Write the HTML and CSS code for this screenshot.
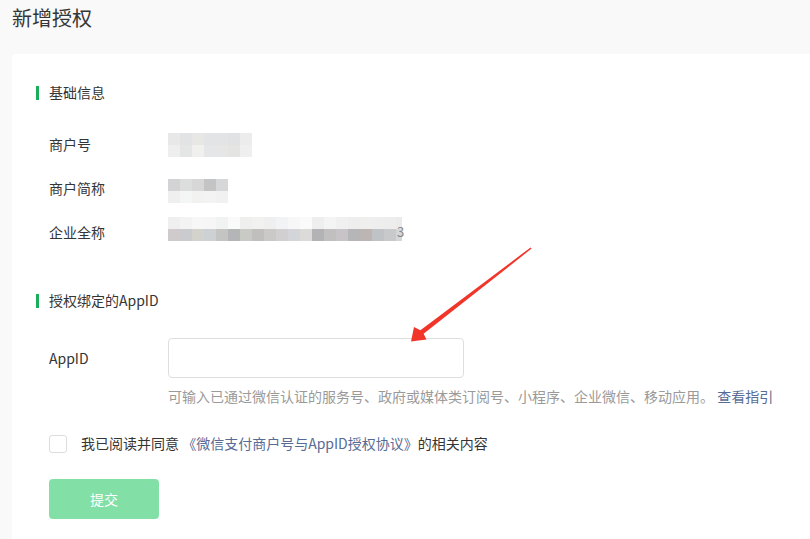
FILE: index.html
```html
<!DOCTYPE html>
<html lang="zh-CN">
<head>
<meta charset="utf-8">
<title>新增授权</title>
<link rel="stylesheet" href="styles.css">
</head>
<body>
<div class="page">
  <h1 class="page-title">新增授权</h1>
  <div class="card">
    <div class="section-title">基础信息</div>
    <div class="info-row">
      <div class="label">商户号</div>
      <div class="mosaic mosaic-1">
        <i style="background:#e8e8e8"></i><i style="background:#e2e3e5"></i><i style="background:#e7e7e6"></i><i style="background:#e3e4e6"></i><i style="background:#e3e4e6"></i><i style="background:#e1e2e4"></i><i style="background:#ececec"></i>
        <i style="background:#efeeee"></i><i style="background:#e4e5e5"></i><i style="background:#f0f0ef"></i><i style="background:#e5e6e8"></i><i style="background:#e6e6e6"></i><i style="background:#e4e4e3"></i><i style="background:#efefef"></i>
      </div>
    </div>
    <div class="info-row">
      <div class="label">商户简称</div>
      <div class="mosaic mosaic-2">
        <i style="background:#d3d2d4"></i><i style="background:#dcdddd"></i><i style="background:#d7d7d8"></i><i style="background:#c5c4c5"></i><i style="background:#d5d7d9"></i>
        <i style="background:#efefef"></i><i style="background:#f4f5f5"></i><i style="background:#f2f2f1"></i><i style="background:#f3f3f3"></i><i style="background:#f1f1f1"></i>
      </div>
    </div>
    <div class="info-row">
      <div class="label">企业全称</div>
      <div class="mosaic mosaic-3">
        <i style="background:#efefef"></i><i style="background:#f3f3f3"></i><i style="background:#f7f7f7"></i><i style="background:#f6f6f6"></i><i style="background:#f1f2f2"></i><i style="background:#fafafa"></i><i style="background:#efefee"></i><i style="background:#f1f1ef"></i><i style="background:#efefef"></i><i style="background:#f2f3f4"></i><i style="background:#f7f7f7"></i><i style="background:#fafafa"></i><i style="background:#eeeeef"></i><i style="background:#f4f4f4"></i><i style="background:#f0f0f0"></i><i style="background:#efeeee"></i><i style="background:#efefee"></i><i style="background:#eeeeee"></i><i style="background:#ededed"></i><i style="background:#ebebeb"></i>
        <i style="background:#cfcbcc"></i><i style="background:#cacbce"></i><i style="background:#d3d2cd"></i><i style="background:#cdd1d4"></i><i style="background:#c4c4c2"></i><i style="background:#b4b5b7"></i><i style="background:#c9cac5"></i><i style="background:#c0bfbd"></i><i style="background:#cbc9c8"></i><i style="background:#d1cfd0"></i><i style="background:#d3d5d8"></i><i style="background:#dcdbd9"></i><i style="background:#b3b3b5"></i><i style="background:#c1bfbf"></i><i style="background:#c8c3c6"></i><i style="background:#b6b6b8"></i><i style="background:#bdb5b3"></i><i style="background:#c0c3c5"></i><i style="background:#c7c9cb"></i><i style="background:#d4d6d8"></i>
      </div>
      <span class="mosaic-tail">3</span>
    </div>

    <div class="section-title section-title-2">授权绑定的AppID</div>
    <div class="form-row">
      <label class="label" for="appid">AppID</label>
      <input id="appid" class="text-input" type="text">
    </div>
    <div class="hint">可输入已通过微信认证的服务号、政府或媒体类订阅号、小程序、企业微信、移动应用。 <a class="link" href="#">查看指引</a></div>

    <div class="agree-row">
      <span class="checkbox"></span>
      <span class="agree-text">我已阅读并同意 <a class="link" href="#">《微信支付商户号与AppID授权协议》</a>的相关内容</span>
    </div>

    <button class="submit-btn" type="button">提交</button>
  </div>

  <svg class="arrow" width="810" height="539" viewBox="0 0 810 539" aria-hidden="true">
    <polygon points="411,341.5 414,327 420.4,330.2 530.6,247.4 531.6,248.6 423.6,333.8 426.5,339.5" fill="#f2352b"/>
  </svg>
</div>
</body>
</html>
```

FILE: styles.css
```css
* { box-sizing: border-box; }
html, body {
  margin: 0;
  padding: 0;
  background: #f9f9f9;
}
body {
  font-family: "Noto Sans CJK SC", "Noto Sans", sans-serif;
  color: #353535;
  font-size: 14px;
}
.page {
  position: relative;
  width: 810px;
  height: 539px;
  overflow: hidden;
}
.page-title {
  margin: 0;
  height: 54px;
  padding: 4px 0 0 12px;
  font-size: 20px;
  font-weight: normal;
  line-height: 28px;
  color: #353535;
}
.card {
  margin-left: 12px;
  background: #fff;
  border-radius: 4px 0 0 0;
  height: 485px;
  padding: 28px 0 0 24px;
}
.section-title {
  position: relative;
  height: 20px;
  line-height: 20px;
  padding-left: 13px;
  font-size: 14px;
  color: #353535;
}
.section-title::before {
  content: "";
  position: absolute;
  left: 0;
  top: 4px;
  width: 3px;
  height: 14px;
  background: #1aad5a;
}
.info-row {
  display: flex;
  align-items: center;
  height: 44px;
  padding-left: 13px;
}
.section-title + .info-row { margin-top: 20px; }
.label {
  width: 119px;
  flex: none;
  line-height: 20px;
  color: #353535;
}
.mosaic {
  display: grid;
  grid-auto-rows: 12px;
  grid-template-columns: repeat(var(--cols), 12px);
}
.mosaic i { display: block; }
.mosaic-1 { --cols: 7; margin-top: 2px; }
.mosaic-2 { --cols: 5; margin-top: 5px; }
.mosaic-3 { --cols: 20; margin-top: -7px; }
.mosaic-3 i:nth-child(20), .mosaic-3 i:nth-child(40) { width: 6px; }
.mosaic-tail {
  margin-left: -11px;
  margin-top: 0;
  font-size: 13px;
  color: #888;
  line-height: 20px;
}
.section-title-2 { margin-top: 36px; }
.form-row {
  display: flex;
  align-items: center;
  margin-top: 28px;
  padding-left: 13px;
}
.text-input {
  width: 296px;
  height: 40px;
  border: 1px solid #dedede;
  border-radius: 4px;
  background: #fff;
  outline: none;
  padding: 0 10px;
  font: inherit;
}
.hint {
  margin-top: 8px;
  padding-left: 132px;
  line-height: 20px;
  color: #9a9a9a;
  white-space: nowrap;
}
.link {
  color: #576b95;
  text-decoration: none;
}
.agree-row {
  display: flex;
  align-items: center;
  margin-top: 27px;
  padding-left: 13px;
  height: 20px;
}
.checkbox {
  width: 18px;
  height: 18px;
  border: 1px solid #dcdcdc;
  border-radius: 3px;
  background: #fff;
  flex: none;
  margin-top: 1px;
}
.agree-text {
  margin-left: 14px;
  line-height: 20px;
  color: #353535;
  white-space: nowrap;
}
.submit-btn {
  display: block;
  margin: 26px 0 0 13px;
  width: 110px;
  height: 40px;
  border: none;
  border-radius: 4px;
  background: #82e0a7;
  color: #fff;
  font: inherit;
  font-size: 14px;
  line-height: 38px;
  padding: 0;
  cursor: pointer;
}
.arrow {
  position: absolute;
  left: 0;
  top: 0;
  pointer-events: none;
}
```
